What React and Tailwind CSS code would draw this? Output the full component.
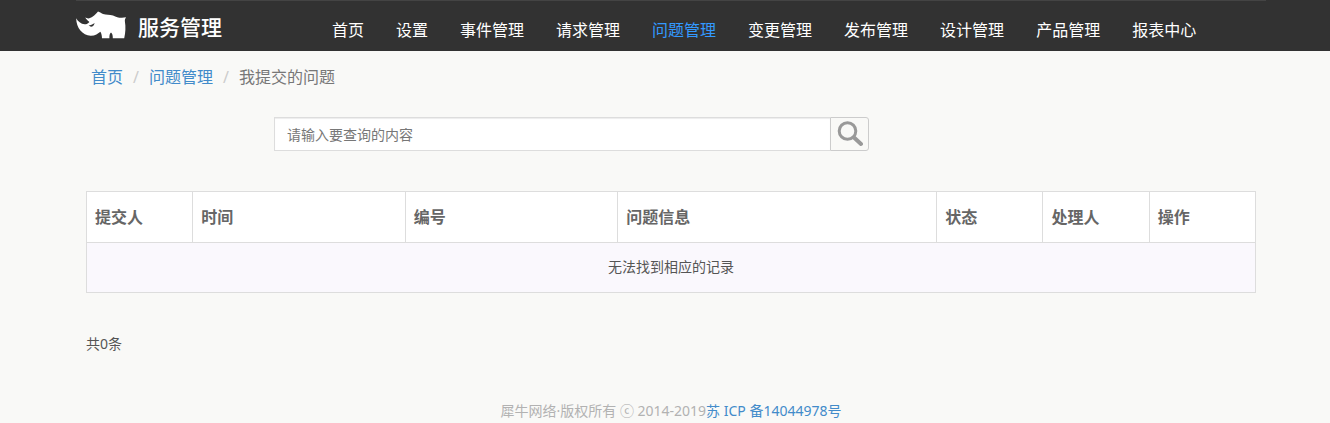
const nav = ['首页', '设置', '事件管理', '请求管理', '问题管理', '变更管理', '发布管理', '设计管理', '产品管理', '报表中心'];

const columns = [
  { name: '提交人', width: 'w-1/11' },
  { name: '时间', width: 'w-2/11' },
  { name: '编号', width: 'w-2/11' },
  { name: '问题信息', width: 'w-3/11' },
  { name: '状态', width: 'w-1/11' },
  { name: '处理人', width: 'w-1/11' },
  { name: '操作', width: 'w-1/11' },
];

function Rhino() {
  return (
    <svg viewBox="0 0 50 28" className="h-7 w-[50px]" aria-hidden="true">
      <path
        fill="#fff"
        d="M0.2 7.2C1.8 10.4 5 12.8 8.6 13.3C10.4 13.4 12 12.3 13.4 10.9C12 9.8 10.2 8.6 9.2 6.6C11.6 8 14.4 7.6 16.8 5.6C18.8 4 20.2 2.4 22 0.4C23.8 0.8 24.8 1.9 27 2.9C30.4 4 33.4 3.2 37 4.4C40.4 5.8 43 7 46 6.8L50 6.2C49.4 7.6 48.6 8.4 48.9 10.4C49.8 15.6 49.6 21.4 48.2 27.2H36.8C36.9 24.6 36.4 22.4 35 21.4C33.6 22.4 33.3 24.8 33.4 27.2H26C25.9 24.8 25.6 23 24.4 20.8C22.2 22.6 19 24.9 14.6 24.8C6.6 24.2 .2 17 .2 7.2Z"
      />
      <path d="M12.6 14.6C14.6 14.4 16.4 13.4 18.6 12C18.2 14 16.8 15.8 15 15.8Z" fill="#323232" />
    </svg>
  );
}

export default function App() {
  return (
    <div className="min-h-screen bg-[#f9f9f7] font-['Noto_Sans','Noto_Sans_CJK_SC',sans-serif] text-sm text-[#555]">
      <header className="bg-[#323232] pl-3">
        <div className="mx-auto flex h-[51px] max-w-[1190px] items-start border-t border-[#444]">
          <a href="#" className="flex w-60 shrink-0 items-center gap-3 pt-1.5 text-[21px] leading-8 font-medium text-white">
            <Rhino />
            <span className="pt-1">服务管理</span>
          </a>
          <nav className="flex pt-[17px] text-base leading-6 whitespace-nowrap">
            {nav.map((item) => (
              <a key={item} href="#" className={item === '问题管理' ? 'px-4 text-[#3399ff]' : 'px-4 text-white'}>
                {item}
              </a>
            ))}
          </nav>
        </div>
      </header>
      <div className="pl-3">
        <main className="mx-auto max-w-[1170px]">
          <nav aria-label="面包屑" className="flex px-[5px] pt-3.5 text-base leading-6">
            <a href="#" className="text-[#428bca]">首页</a>
            <span className="w-[26px] text-center text-[#ccc]">/</span>
            <a href="#" className="text-[#428bca]">问题管理</a>
            <span className="w-[26px] text-center text-[#ccc]">/</span>
            <span className="text-[#777]">我提交的问题</span>
          </nav>
          <form className="ml-47 flex max-w-[595px] pt-7" onSubmit={(e) => e.preventDefault()}>
            <input
              type="text"
              aria-label="查询内容"
              placeholder="请输入要查询的内容"
              className="h-[34px] min-w-0 flex-1 border border-r-0 border-[#ddd] bg-white px-3 shadow-[inset_0_1px_1px_#00000013] placeholder:text-[#777]"
            />
            <button
              type="submit"
              aria-label="查询"
              className="flex h-[34px] w-[39px] items-center justify-center rounded-r-[3px] border border-[#ccc] bg-[#f9f9f7]"
            >
              <svg viewBox="0 0 26 26" className="size-[26px]" fill="none" stroke="#999">
                <circle cx="10.5" cy="10" r="8.3" strokeWidth="3" />
                <path d="M17 16.5L24 23" strokeWidth="4" strokeLinecap="round" />
              </svg>
            </button>
          </form>
          <table className="mt-10 w-full table-fixed border-collapse border border-[#ddd]">
            <thead>
              <tr className="h-[51px] bg-white text-left text-base text-[#666]">
                {columns.map(({ name, width }) => (
                  <th key={name} className={width + ' border border-[#ddd] px-2 font-bold'}>
                    {name}
                  </th>
                ))}
              </tr>
            </thead>
            <tbody>
              <tr className="h-[50px] bg-[#faf8fd]">
                <td colSpan={7} className="border border-[#ddd] pb-0.5 text-center">无法找到相应的记录</td>
              </tr>
            </tbody>
          </table>
          <p className="mt-10 leading-[22px]">共0条</p>
          <footer className="mt-[46px] text-center leading-5 text-[#b2b2b2]">
            犀牛网络·版权所有 ⓒ 2014-2019
            <a href="#" className="text-[#428bca]">苏 ICP 备14044978号</a>
          </footer>
        </main>
      </div>
    </div>
  );
}
